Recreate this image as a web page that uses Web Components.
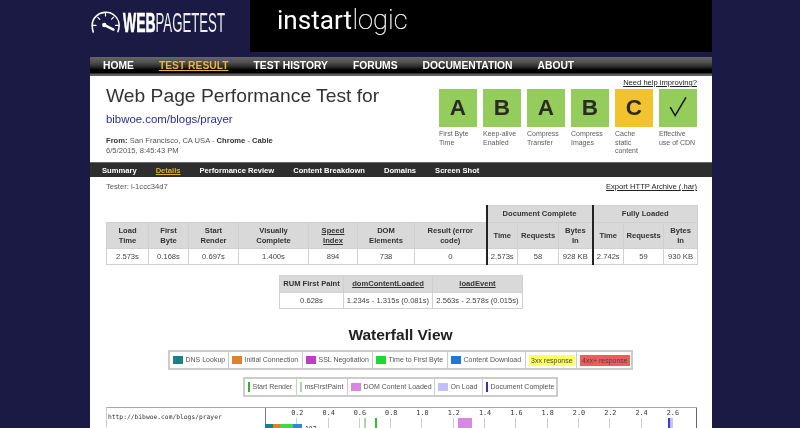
<!DOCTYPE html>
<html lang="en"><head><meta charset="utf-8"><title>WebPageTest</title>
<style>
html,body{margin:0;padding:0;height:428px;overflow:hidden;background:#1a1a44}
body{font-family:"Liberation Sans",Arial,sans-serif;color:#444}
</style></head><body>
<wpt-page>
  <wpt-banner slot="banner"></wpt-banner>
  <wpt-nav slot="nav">
    <a>HOME</a><a class="on">TEST RESULT</a><a>TEST HISTORY</a><a>FORUMS</a><a>DOCUMENTATION</a><a>ABOUT</a>
  </wpt-nav>
  <wpt-summary slot="summary">
    <wpt-grade letter="A" slot="grades">First Byte Time</wpt-grade>
    <wpt-grade letter="B" slot="grades">Keep-alive Enabled</wpt-grade>
    <wpt-grade letter="A" slot="grades">Compress Transfer</wpt-grade>
    <wpt-grade letter="B" slot="grades">Compress Images</wpt-grade>
    <wpt-grade letter="C" tone="warn" slot="grades">Cache static content</wpt-grade>
    <wpt-grade letter="check" slot="grades">Effective use of CDN</wpt-grade>
  </wpt-summary>
  <wpt-subnav slot="subnav"></wpt-subnav>
  <wpt-results slot="results"></wpt-results>
  <wpt-rum slot="rum"></wpt-rum>
  <wpt-legends slot="legends"></wpt-legends>
  <wpt-waterfall slot="waterfall"></wpt-waterfall>
</wpt-page>
<script>
function def(name, html, init){
  customElements.define(name, class extends HTMLElement{
    constructor(){super();this.attachShadow({mode:'open'}).innerHTML=html;}
    connectedCallback(){ if(init) init.call(this,this.shadowRoot); }
  });
}
def('wpt-page',`<style>
:host{display:block;width:622px;margin-left:90px;font-family:"Liberation Sans",Arial,sans-serif;filter:blur(.3px)}
.body{background:#fff;height:352px;overflow:hidden}
</style><slot name="banner"></slot><slot name="nav"></slot>
<div class="body"><slot name="summary"></slot><slot name="subnav"></slot><slot name="results"></slot><slot name="rum"></slot><slot name="legends"></slot><slot name="waterfall"></slot></div>`);

def('wpt-banner',`<style>
:host{display:flex;height:52px;margin-bottom:5px}
.wpt{flex:0 0 160px;display:block}
.il{flex:1;background:#000;display:block}
svg{display:block}
text{font-family:"Liberation Sans",Arial,sans-serif;fill:#fff}
.thin{font-family:Roboto,sans-serif}
</style>
<svg class="wpt" width="160" height="52" viewBox="0 0 160 52">
  <g fill="none" stroke="#fff" stroke-linecap="round">
    <path d="M3.2 32 C1.6 26.5 2 20 6.2 16.2 C10.5 11.8 18.5 11 23.5 14.6 C28.5 18 30.4 24.5 28 31.6" stroke-width="1.6"/>
    <path d="M15.5 13v3M7.8 17.4l2 2M23.6 17.2l-2 2M2.8 25.4h3.2M28.8 25.4h-3.2" stroke-width="1.2"/>
    <path d="M15 25.4 L23.5 29.6" stroke-width="2.4"/>
  </g>
  <circle cx="14.3" cy="25" r="2.2" fill="#fff"/>
  <text x="33" y="32.2" data-w="32.5" font-size="28" font-weight="700" stroke="#fff" stroke-width=".7">WEB</text>
  <text x="65.5" y="32.2" data-w="69.5" font-size="28" fill-opacity=".92">PAGETEST</text>
</svg>
<svg class="il" height="52" viewBox="0 0 462 52" width="462">
  <text class="thin" x="27" y="28.5" data-w="75" font-size="26" font-weight="400">instart</text>
  <text class="thin" x="102.5" y="28.5" data-w="55" font-size="27" font-weight="100" stroke="#fff" stroke-width=".25">logic</text>
</svg>`,function(r){
  r.querySelectorAll('text[data-w]').forEach(t=>{
    const x=+t.getAttribute('x'),y=+t.getAttribute('y'),k=(+t.dataset.w)/t.getComputedTextLength();
    t.setAttribute('x',0);t.setAttribute('y',0);
    t.setAttribute('transform',`translate(${x} ${y}) scale(${k} 1)`);
  });
});

def('wpt-nav',`<style>
:host{display:flex;height:19px;padding-left:13px;gap:25px;align-items:center;box-sizing:border-box;
background:linear-gradient(#666 0,#4e4e4e 30%,#2c2c2c 50%,#000 68%,#000 82%,#555 90%,#6a6a6a 100%)}
::slotted(a){font-size:10.3px;font-weight:700;color:#fff;line-height:19px;margin-top:-3px}
::slotted(a.on){color:#e8b92c;text-decoration:underline}
</style><slot></slot>`);

def('wpt-summary',`<style>
:host{display:flex;height:86px;box-sizing:border-box;padding:0 15px 0 16px;justify-content:space-between;color:#444}
h1{font-size:19.25px;font-weight:400;color:#333;margin:0;padding-top:8px;line-height:24px}
.url{font-size:11.4px;color:#2a2a9c;line-height:14px;margin-top:4px}
.from{font-size:7.6px;line-height:10.5px;margin-top:9.5px;color:#555}
.from b{color:#333}
.right{width:258px}
.help{font-size:7.6px;line-height:14px;margin-bottom:-1px;text-align:right;text-decoration:underline;color:#222}
.grades{display:grid;grid-template-columns:repeat(6,37.7px);gap:6.3px}
</style>
<div><h1>Web Page Performance Test for</h1><div class="url">bibwoe.com/blogs/prayer</div>
<div class="from"><b>From:</b> San Francisco, CA USA - <b>Chrome</b> - <b>Cable</b><br>6/5/2015, 8:45:43 PM</div></div>
<div class="right"><div class="help">Need help improving?</div><div class="grades"><slot name="grades"></slot></div></div>`);

customElements.define('wpt-grade',class extends HTMLElement{
  constructor(){super();this.attachShadow({mode:'open'});}
  connectedCallback(){
    const l=this.getAttribute('letter');
    const warn=this.getAttribute('tone')==='warn';
    const inner=l==='check'
      ?'<svg width="38" height="38" viewBox="0 0 38 38"><path d="M11.3 18 L16.3 26.7 L27.2 8.2" fill="none" stroke="#111" stroke-width="1.5"/></svg>'
      :l;
    this.shadowRoot.innerHTML=`<style>
    :host{display:block}
    .sq{width:37.7px;height:38px;background:${warn?'#f2c32f':'#94cd5b'};color:#2a2a26;font-size:22.5px;font-weight:700;display:flex;align-items:center;justify-content:center}
    svg{display:block}
    .lb{font-size:7px;line-height:8.7px;margin-top:3px;color:#5c5c5c}
    </style><div class="sq">${inner}</div><div class="lb"><slot></slot></div>`;
  }
});

def('wpt-subnav',`<style>
:host{display:block}
.bar{height:15px;box-sizing:border-box;border-top:1px solid #666;background:#2e2e2e;display:flex;gap:19px;padding-left:12px;align-items:center}
span{font-size:7.6px;font-weight:700;color:#fff;white-space:nowrap}
.on{color:#d9ae2c;text-decoration:underline}
.row{display:flex;justify-content:space-between;padding:1px 15px 0 16px;font-size:7.6px;line-height:18px;color:#555}
.row u{color:#222}
</style><div class="bar"><span>Summary</span><span class="on">Details</span><span>Performance Review</span><span>Content Breakdown</span><span>Domains</span><span>Screen Shot</span></div>
<div class="row"><div>Tester: i-1ccc34d7</div><u>Export HTTP Archive (.har)</u></div>`);

const tableCss=`
table{border-collapse:collapse;table-layout:fixed;font-size:7.6px;color:#444}
th,td{border:1px solid #d0d0d0;text-align:center;padding:0;line-height:10px}
th{background:#d9d9d9;color:#333;font-weight:700}
td{background:#fff;height:15px}
.sep{border-left:2px solid #222}
.blank{border:0;background:#fff;border-bottom:1px solid #d0d0d0}
u{text-decoration:underline}
`;
def('wpt-results',`<style>:host{display:block;padding:9px 0 0 16px}${tableCss}
table{width:591px}
.h1{height:17px}.h2{height:26px}
</style><table>
<colgroup><col style="width:42px"><col style="width:40px"><col style="width:50px"><col style="width:70px"><col style="width:49px"><col style="width:57px"><col style="width:72px"><col style="width:31px"><col style="width:41px"><col style="width:34px"><col style="width:31px"><col style="width:40px"><col style="width:34px"></colgroup>
<tr class="h1"><th class="blank" colspan="7"></th><th class="sep" colspan="3">Document Complete</th><th class="sep" colspan="3">Fully Loaded</th></tr>
<tr class="h2"><th>Load<br>Time</th><th>First<br>Byte</th><th>Start<br>Render</th><th>Visually<br>Complete</th><th><u>Speed<br>Index</u></th><th>DOM<br>Elements</th><th>Result (error<br>code)</th><th class="sep">Time</th><th>Requests</th><th>Bytes<br>In</th><th class="sep">Time</th><th>Requests</th><th>Bytes<br>In</th></tr>
<tr><td>2.573s</td><td>0.168s</td><td>0.697s</td><td>1.400s</td><td>894</td><td>738</td><td>0</td><td class="sep">2.573s</td><td>58</td><td>928 KB</td><td class="sep">2.742s</td><td>59</td><td>930 KB</td></tr>
</table>`);

def('wpt-rum',`<style>:host{display:block;padding:10px 0 0 189px}${tableCss}
table{width:243px}
th{height:16px}
td{height:15px}
</style><table><colgroup><col style="width:64px"><col style="width:89px"><col style="width:90px"></colgroup>
<tr><th>RUM First Paint</th><th><u>domContentLoaded</u></th><th><u>loadEvent</u></th></tr>
<tr><td>0.628s</td><td>1.234s - 1.315s (0.081s)</td><td>2.563s - 2.578s (0.015s)</td></tr></table>`);

def('wpt-key',`<style>
:host{display:flex;align-items:center;box-sizing:border-box;height:100%;padding-left:3px;gap:2.5px;border-left:1px solid #ccc;font-size:7px;color:#555;white-space:nowrap}
.sw{width:10px;height:8px;flex:none}
.ln{width:2px;height:10px;flex:none}
.tx{line-height:12px}
</style><i></i><span class="tx"><slot></slot></span>`,function(r){
  this.style.width=this.getAttribute('w')+'px';
  if(!this.previousElementSibling) this.style.borderLeft='0';
  const i=r.querySelector('i'),c=this.getAttribute('color'),k=this.getAttribute('kind');
  if(k==='fill'){i.remove();const s=r.querySelector('.tx');s.style.background=c;s.style.padding='0 2px';s.style.lineHeight='11px';s.style.color='#444';}
  else{i.className=k==='line'?'ln':'sw';i.style.background=c;}
});

def('wpt-legend',`<style>:host{display:flex;height:16px;box-sizing:content-box;border:2px solid #ccc;width:max-content;background:#fff}</style><slot></slot>`);

def('wpt-legends',`<style>
:host{display:block}
h2{font-size:15.5px;line-height:20px;text-align:center;margin:0 0 0 -1px;padding:16px 0 5px;color:#222;font-weight:700}
.gap{height:7px}
wpt-legend{margin-left:78px}
wpt-legend.b{margin-left:153px}
</style><h2>Waterfall View</h2>
<wpt-legend><wpt-key w="58" color="#1f7f86">DNS Lookup</wpt-key><wpt-key w="74" color="#e0812c">Initial Connection</wpt-key><wpt-key w="70" color="#c23cc8">SSL Negotiation</wpt-key><wpt-key w="75" color="#1fd92f">Time to First Byte</wpt-key><wpt-key w="78" color="#1e78dc">Content Download</wpt-key><wpt-key w="51" kind="fill" color="#ffff60">3xx response</wpt-key><wpt-key w="55" kind="fill" color="#f05c5c">4xx+ response</wpt-key></wpt-legend>
<div class="gap"></div>
<wpt-legend class="b"><wpt-key w="51" kind="line" color="#2fb52f">Start Render</wpt-key><wpt-key w="51" kind="line" color="#a8d8a8">msFirstPaint</wpt-key><wpt-key w="87" color="#d888e0">DOM Content Loaded</wpt-key><wpt-key w="48" color="#c0c0ff">On Load</wpt-key><wpt-key w="74" kind="line" color="#3434b8">Document Complete</wpt-key></wpt-legend>`);

const ticks=['0.2','0.4','0.6','0.8','1.0','1.2','1.4','1.6','1.8','2.0','2.2','2.4','2.6'];
def('wpt-waterfall',`<style>
:host{display:block;margin:10px 0 0 16px;width:591px;font-family:"DejaVu Sans Mono",monospace;font-size:6.3px;color:#333}
.g{display:grid;grid-template-columns:158px 432px;height:19px;border-top:1px solid #aaa;border-left:1px solid #ccc}
.url{line-height:17px;padding-left:1px;background:#fff}
.chart{position:relative;border-left:1px solid #777;border-right:1px solid #666;display:flex;background:#fff}
.tick{flex:0 0 31.3px;display:flex;flex-direction:column;align-items:flex-end}
.tick span{transform:translateX(50%);line-height:11px;height:10px;font-size:6.8px}
.tick i{width:1px;height:10px;background:#ccc}
.m{position:absolute;top:10px;height:10px}
.row2{height:8px;border-top:1px solid #ccc;background:#f2f2f2;line-height:9px;padding-left:8px;white-space:pre;margin-top:-1px;width:583px}
.v{position:absolute;top:16.5px;left:39px;font-size:6.4px;line-height:8px}
</style><div class="g"><div class="url">http://bibwoe.com/blogs/prayer</div><div class="chart">
<div class="m" style="left:98px;width:1.5px;background:#a8d8a8"></div>
<div class="m" style="left:109px;width:2px;background:#2fc02f"></div>
<div class="m" style="left:192px;width:13.5px;background:#d888e0"></div>
<div class="m" style="left:401.5px;width:2.5px;background:#3a3ad8"></div>
<div class="m" style="left:404px;width:1.5px;background:#c0c0ff"></div>
<div class="m" style="left:-1px;top:16px;height:6px;width:8px;background:#1f7f86"></div>
<div class="m" style="left:7px;top:16px;height:6px;width:7px;background:#e0812c"></div>
<div class="m" style="left:14px;top:16px;height:6px;width:13px;background:#3fd94f"></div>
<div class="m" style="left:27px;top:16px;height:6px;width:9px;background:#2f88e0"></div>
<div class="v">187</div>
</div></div><div class="row2">  1. bibwoe.com - prayer</div>`,function(r){
  const ch=r.querySelector('.chart');
  ticks.forEach(t=>{const d=document.createElement('div');d.className='tick';d.innerHTML='<span>'+t+'</span><i></i>';ch.appendChild(d);});
});
</script>
</body></html>
